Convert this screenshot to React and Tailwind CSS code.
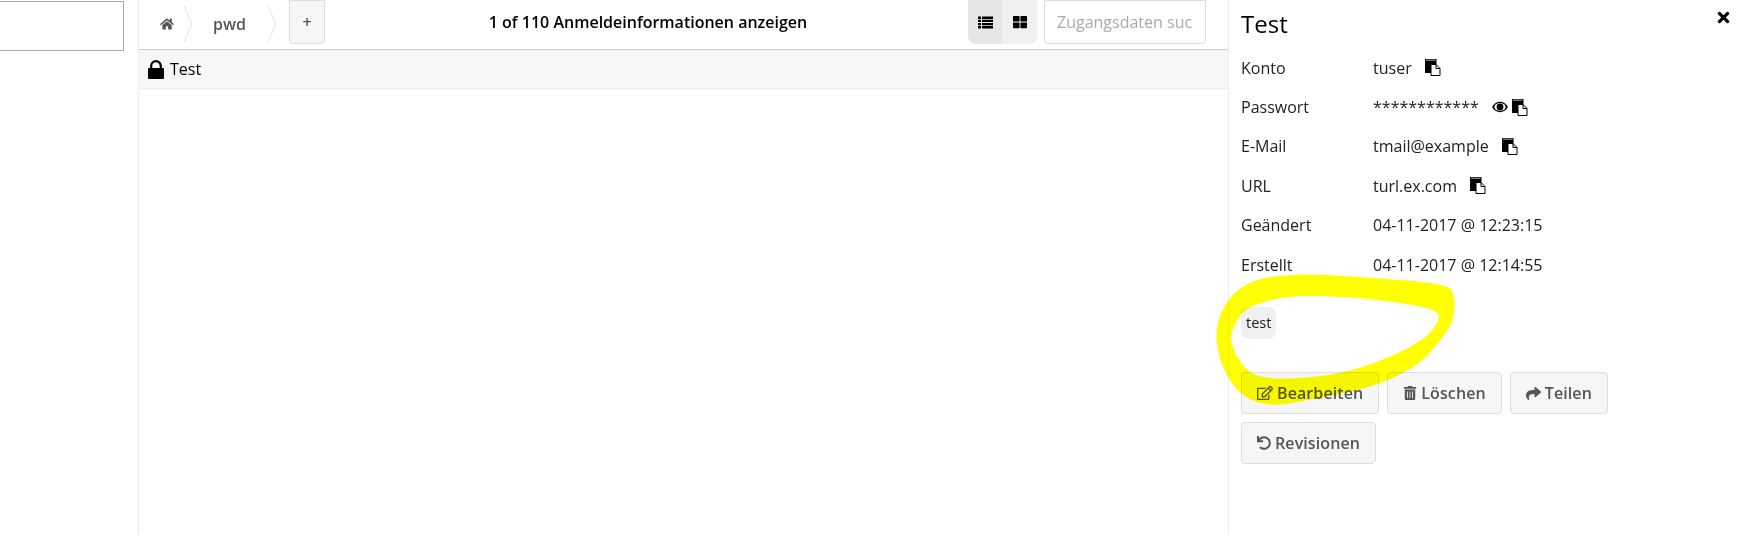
import { FaHome, FaThLarge, FaRegEdit, FaTrashAlt, FaShare, FaUndo, FaTimes } from 'react-icons/fa';

const outer = [[1238, 289], [1257, 279], [1285, 275], [1317, 274], [1387, 279], [1425, 282], [1447, 286], [1454, 292], [1455, 317], [1443, 338], [1416, 368], [1367, 389], [1312, 399], [1273, 407], [1241, 397], [1220, 365], [1215, 330], [1224, 305]];
const inner = [[1233, 327], [1230, 343], [1243, 368], [1260, 378], [1300, 379], [1350, 372], [1400, 353], [1430, 335], [1442, 315], [1427, 307], [1367, 298], [1300, 295], [1267, 300], [1243, 310]];

function smooth(pts) {
  const mid = (a, b) => [(a[0] + b[0]) / 2, (a[1] + b[1]) / 2];
  const start = mid(pts[pts.length - 1], pts[0]);
  let d = `M${start[0]} ${start[1]}`;
  pts.forEach((p, i) => {
    const m = mid(p, pts[(i + 1) % pts.length]);
    d += ` Q${p[0]} ${p[1]} ${m[0]} ${m[1]}`;
  });
  return d + 'Z';
}

function CopyIcon() {
  return (
    <svg width="16" height="17" viewBox="0 0 16 17" className="shrink-0">
      <rect x="0" y="0" width="11.5" height="14" fill="#000" />
      <rect x="1" y="0.5" width="9.5" height="1.5" fill="#777" />
      <path d="M6 5.5h5l4 4v7h-9z" fill="#fff" stroke="#000" strokeWidth="1" />
      <path d="M11 5.5v4h4" fill="none" stroke="#000" strokeWidth="1" />
    </svg>
  );
}

function LockIcon() {
  return (
    <svg width="16" height="19" viewBox="0 0 16 19" className="shrink-0">
      <path d="M3.2 9V6a4.8 4.8 0 0 1 9.6 0v3" fill="none" stroke="#000" strokeWidth="2.2" />
      <rect x="0" y="8" width="16" height="11" rx="1" fill="#000" />
    </svg>
  );
}

function ListIcon() {
  return (
    <svg width="15" height="13" viewBox="0 0 15 13" className="shrink-0">
      <path d="M0 0.5h3v2.4h-3zM4 0.5h11v2.4h-11zM0 3.7h3v2.4h-3zM4 3.7h11v2.4h-11zM0 6.9h3v2.4h-3zM4 6.9h11v2.4h-11zM0 10.1h3v2.4h-3zM4 10.1h11v2.4h-11z" fill="#000" />
    </svg>
  );
}

function EyeIcon() {
  return (
    <svg width="16" height="12" viewBox="0 0 16 12" className="shrink-0">
      <path d="M0 6c2-3.4 4.8-5.2 8-5.2s6 1.8 8 5.2c-2 3.4-4.8 5.2-8 5.2S2 9.400 0 6z" fill="#000" />
      <ellipse cx="8" cy="6" rx="5.600" ry="3.900" fill="#fff" />
      <circle cx="8" cy="6" r="3.400" fill="#000" />
    </svg>
  );
}

function Chevron() {
  return (
    <svg width="10" height="38" viewBox="0 0 10 38" className="shrink-0">
      <path d="M1 1l8 18-8 18" fill="none" stroke="#e4e4e4" strokeWidth="1" />
    </svg>
  );
}

function Row({ label, children }) {
  return (
    <div className="flex items-center h-[39.4px]">
      <div className="w-[132px] shrink-0">{label}</div>
      <div className="flex items-center">{children}</div>
    </div>
  );
}

function Btn({ icon, children }) {
  return (
    <button className="h-[42px] px-[15px] flex items-center gap-[4px] bg-[#f6f6f6] border border-[#dddddd] rounded-[4px] text-[#555555] font-semibold text-base tracking-[0.1px]">
      {icon}
      {children}
    </button>
  );
}

export default function App() {
  return (
    <div className="relative w-[1746px] h-[535px] overflow-hidden flex bg-white text-black text-base font-['Open_Sans',sans-serif]">
      <div className="w-[139px] shrink-0 border-r border-[#eeeeee] pt-px">
        <div className="w-[124px] h-[50px] border border-l-0 border-[#aaaaaa]"></div>
      </div>

      <div className="flex-1 min-w-0">
        <div className="h-[50px] border-b border-[#cccccc] flex items-start pl-[20px] pr-[22px]">
          <div className="flex items-center h-[48px]">
            <FaHome className="text-[#555555] text-[14px] ml-px" />
            <div className="ml-[9px]"><Chevron /></div>
            <span className="ml-[20px] text-[#555555] font-semibold">pwd</span>
            <div className="ml-[21px]"><Chevron /></div>
            <button className="ml-[12px] w-[36px] h-[44px] -mt-[4px] bg-[#f6f6f6] border border-[#dddddd] rounded-b-[4px] text-[#555555] font-semibold text-base">+</button>
          </div>
          <div className="flex-1 h-[44px] flex items-center justify-center font-semibold text-base pl-[3px]">1 of 110 Anmeldeinformationen anzeigen</div>
          <div className="flex h-[44px] rounded-b-[8px] overflow-hidden">
            <div className="w-[34px] bg-[#e6e6e6] flex items-center justify-center"><ListIcon /></div>
            <div className="w-[35px] bg-[#f0f0f0] flex items-center justify-center"><FaThLarge className="text-[14px]" /></div>
          </div>
          <input
            placeholder="Zugangsdaten suchen"
            className="ml-[7px] w-[162px] h-[44px] px-[12px] border border-[#dddddd] rounded-b-[4px] text-base outline-none placeholder:text-[#aaaaaa]"
          />
        </div>
        <div className="h-[39px] bg-[#f7f7f7] border-b border-[#eeeeee] flex items-center pl-[9px] gap-[6px]">
          <LockIcon />
          <span>Test</span>
        </div>
      </div>

      <div className="relative w-[518px] shrink-0 border-l border-[#eeeeee] pl-[12px] text-[#222222]">
        <h2 className="text-[24px] leading-[33px] mt-[7px] text-black">Test</h2>
        <div className="mt-[8px]">
          <Row label="Konto">tuser<span className="ml-[13px]"><CopyIcon /></span></Row>
          <Row label="Passwort">
            ************
            <span className="ml-[13px]"><EyeIcon /></span>
            <span className="ml-[4px]"><CopyIcon /></span>
          </Row>
          <Row label="E-Mail">tmail@example<span className="ml-[13px]"><CopyIcon /></span></Row>
          <Row label="URL">turl.ex.com<span className="ml-[13px]"><CopyIcon /></span></Row>
          <Row label="Geändert">04-11-2017 @ 12:23:15</Row>
          <Row label="Erstellt">04-11-2017 @ 12:14:55</Row>
        </div>
        <div className="mt-[23px] flex">
          <span className="h-[32px] px-[5px] flex items-center bg-[#f0f0f0] rounded-[8px] text-[14.5px]">test</span>
        </div>
        <div className="mt-[33px] flex flex-wrap gap-x-[8px] gap-y-[8px] w-[380px]">
          <Btn icon={<FaRegEdit className="text-[16px]" />}>Bearbeiten</Btn>
          <Btn icon={<FaTrashAlt className="text-[14px]" />}>Löschen</Btn>
          <Btn icon={<FaShare className="text-[15px]" />}>Teilen</Btn>
          <Btn icon={<FaUndo className="text-[14px]" />}>Revisionen</Btn>
        </div>
        <FaTimes className="absolute left-[486px] top-[9px] text-[17px] text-black" />
      </div>

      {/* the yellow marker scribble lies over the page */}
      <svg className="absolute inset-0 mix-blend-multiply pointer-events-none" width="1746" height="535" viewBox="0 0 1746 535">
        <path d={smooth(outer) + smooth(inner)} fill="#ffff00" fillRule="evenodd" />
      </svg>
    </div>
  );
}
